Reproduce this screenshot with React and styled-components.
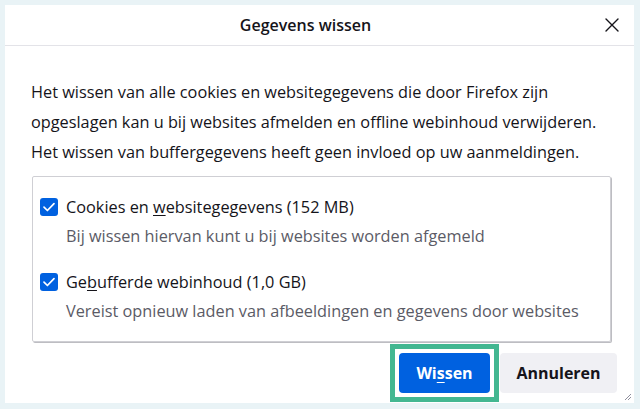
import React from "react";
import styled, { createGlobalStyle } from "styled-components";

const GlobalStyle = createGlobalStyle`
  html, body {
    margin: 0;
    padding: 0;
    background: #e9f3f6;
  }
  body {
    font-family: "Open Sans", "Noto Sans", sans-serif;
    color: #15141a;
  }
`;

const Page = styled.div`
  width: 640px;
  height: 409px;
  padding: 5px 6px 6px 5px;
  box-sizing: border-box;
`;

const Dialog = styled.div`
  position: relative;
  width: 629px;
  height: 398px;
  background: #ffffff;
  display: flex;
  flex-direction: column;
`;

const Header = styled.div`
  height: 40px;
  display: flex;
  align-items: center;
  border-bottom: 1px solid #e3e3e8;
`;

const Title = styled.h1`
  flex: 1;
  margin: 0;
  padding-left: 8px;
  text-align: center;
  font-size: 16px;
  font-weight: 600;
`;

const CloseButton = styled.button`
  width: 28px;
  height: 28px;
  margin-right: 8px;
  border: none;
  background: transparent;
  display: flex;
  align-items: center;
  justify-content: center;
  padding: 0;
  color: #15141a;
`;

const Body = styled.div`
  flex: 1;
  padding: 31px 17px 0 26px;
  display: flex;
  flex-direction: column;
`;

const Intro = styled.p`
  margin: 0;
  font-size: 16.3px;
  line-height: 30px;
  white-space: nowrap;
`;

const Group = styled.div`
  margin: 9px 0 0 1px;
  width: 579px;
  height: 166px;
  box-sizing: border-box;
  border: 1px solid #cfcfd4;
  border-radius: 2px;
  box-shadow: 1px 1px 0 #bdbdc2;
  padding: 20px 7px 0;
  display: flex;
  flex-direction: column;
  gap: 26px;
`;

const Option = styled.div`
  display: grid;
  grid-template-columns: 18px 1fr;
  column-gap: 8px;
  align-items: center;
`;

const Box = styled.span`
  width: 18px;
  height: 18px;
  border-radius: 3px;
  background: #0061e0;
  display: flex;
  align-items: center;
  justify-content: center;
`;

const Label = styled.span`
  font-size: 16.3px;
  line-height: 20px;
  white-space: nowrap;

  u {
    text-decoration-thickness: 1px;
    text-underline-offset: 2px;
  }
`;

const Hint = styled.span`
  grid-column: 2;
  font-size: 16.3px;
  line-height: 20px;
  margin-top: 9px;
  color: #5b5b66;
  white-space: nowrap;
`;

const Actions = styled.div`
  display: flex;
  justify-content: flex-end;
  gap: 10px;
  padding-top: 11px;
`;

const Button = styled.button`
  position: relative;
  height: 40px;
  padding: 0;
  width: ${(p) => p.$width}px;
  border: none;
  border-radius: 4px;
  font-family: inherit;
  font-size: 16px;
  font-weight: 700;
  background: ${(p) => (p.$primary ? "#0061e0" : "#f0f0f4")};
  color: ${(p) => (p.$primary ? "#ffffff" : "#15141a")};

  &::after {
    content: "";
    display: ${(p) => (p.$focused ? "block" : "none")};
    position: absolute;
    inset: -9px;
    border: 5px solid #43b791;
  }

  u {
    text-decoration-thickness: 1px;
    text-underline-offset: 3px;
  }
`;

const Grip = styled.svg`
  position: absolute;
  right: 2px;
  bottom: 2px;
`;

const Check = () => (
  <svg width="14" height="14" viewBox="0 0 14 14">
    <path d="M2 7.2 L5.4 10.5 L12 3.6" fill="none" stroke="#fff" strokeWidth="1.7" strokeLinecap="round" strokeLinejoin="round" />
  </svg>
);

const options = [
  {
    label: (
      <>
        Cookies en <u>w</u>ebsitegegevens (152 MB)
      </>
    ),
    hint: "Bij wissen hiervan kunt u bij websites worden afgemeld",
  },
  {
    label: (
      <>
        Ge<u>b</u>ufferde webinhoud (1,0 GB)
      </>
    ),
    hint: "Vereist opnieuw laden van afbeeldingen en gegevens door websites",
  },
];

export default function App() {
  return (
    <Page>
      <GlobalStyle />
      <Dialog>
        <Header>
          <Title>Gegevens wissen</Title>
          <CloseButton aria-label="Sluiten">
            <svg width="16" height="16" viewBox="0 0 16 16">
              <path d="M2 2 L14 14 M14 2 L2 14" stroke="#15141a" strokeWidth="1.4" strokeLinecap="round" />
            </svg>
          </CloseButton>
        </Header>
        <Body>
          <Intro>
            Het wissen van alle cookies en websitegegevens die door Firefox zijn
            <br />
            opgeslagen kan u bij websites afmelden en offline webinhoud verwijderen.
            <br />
            Het wissen van buffergegevens heeft geen invloed op uw aanmeldingen.
          </Intro>
          <Group>
            {options.map((o, i) => (
              <Option key={i}>
                <Box>
                  <Check />
                </Box>
                <Label>{o.label}</Label>
                <Hint>{o.hint}</Hint>
              </Option>
            ))}
          </Group>
          <Actions>
            <Button $primary $focused $width={91}>
              Wi<u>s</u>sen
            </Button>
            <Button $width={117}>Annuleren</Button>
          </Actions>
        </Body>
        <Grip width="8" height="8" viewBox="0 0 8 8">
          <path d="M7 1 L1 7 M7 4 L4 7" stroke="#8f8f9d" strokeWidth="1" />
        </Grip>
      </Dialog>
    </Page>
  );
}
